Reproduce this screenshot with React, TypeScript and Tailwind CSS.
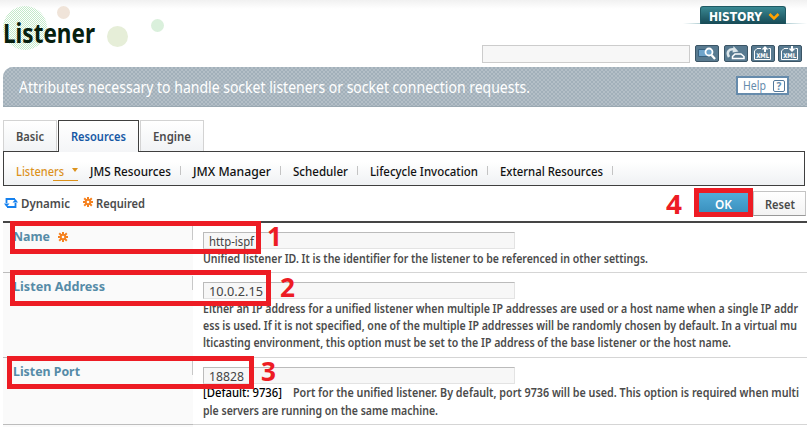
import { useLayoutEffect, useRef } from "react";
import type { ReactNode } from "react";

/* One line of text, condensed or widened to the given width. */
function Line({ text, w, className = "" }: { text: string; w: number; className?: string }) {
  const ref = useRef<HTMLSpanElement>(null);
  useLayoutEffect(() => {
    const el = ref.current;
    if (el && el.offsetWidth) {
      el.style.transform = "none";
      el.style.transform = `scaleX(${w / el.getBoundingClientRect().width})`;
    }
  }, [w, text]);
  return (
    <span className={`block shrink-0 whitespace-nowrap ${className}`} style={{ width: w }}>
      <span ref={ref} className="inline-block origin-left align-top">
        {text}
      </span>
    </span>
  );
}

function Gear({ className = "" }: { className?: string }) {
  return (
    <svg viewBox="0 0 10 10" className={`size-[10px] shrink-0 ${className}`} fill="none" stroke="#f58220">
      <path d="M5 0v3M5 7v3M0 5h3M7 5h3M1.2 1.2l2.2 2.2M6.6 6.6l2.2 2.2M8.8 1.2 6.6 3.4M3.4 6.6 1.2 8.8" strokeWidth="2" />
      <circle cx="5" cy="5" r="2.3" strokeWidth="2" />
    </svg>
  );
}

function ToolButton({ children, className = "" }: { children: ReactNode; className?: string }) {
  return (
    <button className={`h-[17px] w-6 shrink-0 rounded-[2px] border border-[#3b5566] bg-[#587a90] ${className}`}>
      <svg viewBox="0 0 22 15" className="block h-[15px] w-[22px]" fill="none" stroke="white">
        {children}
      </svg>
    </button>
  );
}

function XmlIcon({ up }: { up?: boolean }) {
  return (
    <>
      <path d="M2.5 13.500V5L5 2.500h4M16.500 2.500h2v11H2.500" strokeWidth="1" />
      <path d={up ? "M13 0 9.500 3.500H12V6h2V3.500h2.500Z" : "M13 6 9.500 2.500H12V0h2v2.500h2.500Z"} fill="white" stroke="none" />
      <text x="4.200" y="12.300" textLength="13" lengthAdjust="spacingAndGlyphs" className="font-['DejaVu_Sans',sans-serif] text-[6.500px] font-bold" fill="white" stroke="none">
        XML
      </text>
    </>
  );
}

function Row({ label, lw, required, value, vw, height, children }: {
  label: string; lw: number; required?: boolean; value: string; vw: number; height: string; children: ReactNode;
}) {
  return (
    <div className={`flex border-b border-[#d5d5d5] ${height}`}>
      <div className="-mb-px flex w-[190px] shrink-0 justify-between border-b border-[#bcbcbc] bg-[#fafafa] pl-[10px]">
        <div className="flex h-7 items-start pt-[6px] text-[12.5px] leading-4 font-bold text-[#558ba7]">
          <Line text={label} w={lw} />
          {required && <Gear className="mt-[3px] ml-[8px]" />}
        </div>
        <div className="mt-[3px] h-[14px] w-px bg-[#c8c8c8]" />
      </div>
      <div className="ml-[10px]">
        <div className="mt-[9px] flex h-[17px] w-[312px] items-start border border-[#e3e3e3] border-t-[#bbb] border-l-[#bbb] bg-[#f7f7f7] pl-[5px] text-[13px] font-normal text-[#444]">
          <Line text={value} w={vw} className="leading-4" />
        </div>
        {children}
      </div>
    </div>
  );
}

const navItems = [
  { text: "JMS Resources", w: 81, box: "w-[103px]" },
  { text: "JMX Manager", w: 78, box: "w-[100px]" },
  { text: "Scheduler", w: 55, box: "w-[77px]" },
  { text: "Lifecycle Invocation", w: 108, box: "w-[130px]" },
  { text: "External Resources", w: 103, box: "w-[125px]" },
];

export default function App() {
  return (
    <div className="relative h-[427px] w-[807px] overflow-hidden bg-white font-['Noto_Sans','Open_Sans',sans-serif] text-[12px] text-[#4b4b4b]">
      <header className="flex h-[67px] justify-between bg-[linear-gradient(#f1f1f1_0px,#ffffff_9px)]">
        <div className="relative pt-[15px] pl-[3px]">
          <svg className="absolute top-0 left-0 h-[60px] w-[180px]">
            <defs>
              <pattern id="dots" width="2" height="2" patternUnits="userSpaceOnUse">
                <path d="M0 0h1v1H0zM1 1h1v1H1z" fill="#c3e9c9" shapeRendering="crispEdges" />
              </pattern>
            </defs>
            <circle cx="25" cy="28" r="22" fill="url(#dots)" />
            <circle cx="63.5" cy="12.5" r="6.5" fill="#f0e4d9" />
            <circle cx="117.5" cy="36.5" r="10.5" fill="#e6eed8" />
            <circle cx="157.5" cy="25.5" r="6.5" fill="#daf0dc" />
          </svg>
          <h1 className="relative text-[27px] leading-9 font-bold text-[#07200f]">
            <Line text="Listener" w={92} />
          </h1>
        </div>
        <div className="flex w-[325px] flex-col">
          <div className="flex h-6 w-full items-end justify-end bg-[linear-gradient(90deg,transparent,#8fb9c0_25px,#8fb9c0_95px,transparent)] bg-[length:124px_1px] bg-[position:right_0px_bottom_0px] bg-no-repeat pt-[6px] pr-[21px]">
            <button className="flex h-[18px] w-[86px] items-center rounded-t-[3px] border border-b-0 border-[#1f5963] bg-linear-to-b from-[#3a8993] to-[#174a55] pt-[2px] pl-[8px] font-['DejaVu_Sans',sans-serif] text-[13px] font-bold text-white">
              <Line text="HISTORY" w={53} className="leading-4" />
              <svg viewBox="0 0 12 8" className="ml-[6px] h-[8px] w-3">
                <path d="m1.5 1 4.5 4.5L10.500 1" fill="none" stroke="#ffa200" strokeWidth="2.5" />
              </svg>
            </button>
          </div>
          <div className="flex pt-[21px]">
            <div className="h-[18px] w-[208px] shrink-0 border border-[#ccc] bg-[#f7f7f7]" />
            <ToolButton className="ml-[5px]">
              <path d="M2.500 3.500h9v7h-9Z" fill="#6ea4cb" stroke="#38617f" />
              <circle cx="13" cy="6" r="3.500" fill="#6ea4cb" strokeWidth="1.8" />
              <path d="m15.500 9 3.500 4" strokeWidth="2.3" />
            </ToolButton>
            <ToolButton className="ml-[5px]">
              <path d="M4 11C1 6 4 2.500 9.500 3.500" strokeWidth="2.500" stroke="#dce6ea" />
              <path d="m8.500 0 5 5.500-6 1Z" fill="#dce6ea" stroke="none" />
              <path d="M7.500 10.500 10 8h6l3 2.500v2H7.500Z" strokeWidth="1.500" />
            </ToolButton>
            <ToolButton className="ml-[3px]"><XmlIcon up /></ToolButton>
            <ToolButton className="ml-[3px]"><XmlIcon /></ToolButton>
          </div>
        </div>
      </header>

      <section className="ml-[3px] flex h-10 items-start justify-between rounded-tl-[10px] border-b border-[#9aa8b1] bg-[#b4bfc7] bg-[repeating-conic-gradient(#a2b0ba_0_25%,#b4bfc7_0_50%)] bg-[length:4px_4px] pr-[18px] pl-[16px]">
        <Line text="Attributes necessary to handle socket listeners or socket connection requests." w={511} className="pt-[8px] text-[16px] leading-6 text-white" />
        <button className="mt-[9px] flex h-[19px] w-[53px] items-center border-2 border-[#668bac] bg-white pl-[5px] text-[12px] text-[#668bac]">
          <Line text="Help" w={23} className="leading-4" />
          <span className="ml-[7px] flex size-3 items-center justify-center rounded-[2px] border border-[#54799b] text-[10px] leading-none font-bold">?</span>
        </button>
      </section>

      <nav className="relative z-10 mt-[13px] ml-[3px] flex h-8 items-start gap-px font-semibold">
        <div className="h-[31px] w-[54px] border border-b-0 border-[#d3d3d3] bg-linear-to-b from-white to-[#f1f3f5] pt-[8px] pl-[12px] leading-4">
          <Line text="Basic" w={28} />
        </div>
        <div className="h-8 w-[81px] border border-b-0 border-[#3f3f3f] bg-linear-to-b from-white to-[#f4f5f7] pt-[8px] pl-[12px] leading-4 text-[#1658a5]">
          <Line text="Resources" w={55} />
        </div>
        <div className="h-[31px] w-[64px] border border-b-0 border-[#d3d3d3] bg-linear-to-b from-white to-[#f1f3f5] pt-[8px] pl-[12px] leading-4">
          <Line text="Engine" w={38} />
        </div>
      </nav>

      <div className="-mt-px ml-[3px] flex h-[35px] w-[802px] items-start border border-[#3f3f3f] bg-linear-to-b from-white from-30% to-[#eff1f3] pt-[12px] pl-[12px] leading-4 font-medium text-[#111]">
        <div className="flex h-[17px] w-[74px] text-[#dc921c]">
          <Line text="Listeners" w={48} />
          <div className="-ml-[11px] flex h-[17px] w-[25px] shrink-0 justify-end border-b border-[#dc921c] pt-[4px]">
            <div className="h-0 w-0 border-x-[3.5px] border-t-4 border-x-transparent border-t-[#dc921c]" />
          </div>
        </div>
        {navItems.map((n) => (
          <div key={n.text} className={`flex shrink-0 justify-between ${n.box}`}>
            <Line text={n.text} w={n.w} />
            <div className="mt-[2px] mr-[12px] h-[9px] w-px bg-[#c4c4c4]" />
          </div>
        ))}
      </div>

      <div className="flex h-[35px] items-start pl-[4px] font-semibold">
        <svg viewBox="0 0 14 12" className="mt-[11px] h-3 w-[14px] shrink-0" fill="none" stroke="#1681ee" strokeWidth="1.8">
          <path d="M2.500 6V2h8.500M11.500 6v4H3" />
          <path d="M0 6.500h5.500L2.500 10ZM8.500 5.500H14L11.500 2Z" fill="#1681ee" stroke="none" />
        </svg>
        <Line text="Dynamic" w={49} className="mt-[10px] ml-[3px] leading-4" />
        <Gear className="mt-[11px] ml-[13px]" />
        <Line text="Required" w={49} className="mt-[10px] ml-[3px] leading-4" />
        <div className="mt-[2px] ml-auto h-[29px] w-[59px] shrink-0 border-[5px] border-[#ed1c24] bg-linear-to-b from-[#52add9] to-[#3b91bf] pt-[4px] pl-[16px] text-white">
          <Line text="OK" w={17} className="leading-4" />
        </div>
        <div className="mt-[5px] mr-px h-[25px] w-[53px] shrink-0 border border-[#c4c4c4] border-b-[#999] bg-linear-to-b from-white to-[#f3f3f3] pt-[5px] pl-[11px]">
          <Line text="Reset" w={30} className="leading-4" />
        </div>
      </div>

      <main className="ml-[3px] border-t-2 border-[#454545] font-semibold">
        <Row label="Name" lw={37} required value="http-ispf" vw={45} height="h-[50px]">
          <Line text="Unified listener ID. It is the identifier for the listener to be referenced in other settings." w={445} className="mt-px leading-[17px]" />
        </Row>
        <Row label="Listen Address" lw={92} value="10.0.2.15" vw={54} height="h-[85px]">
          <Line text="Either an IP address for a unified listener when multiple IP addresses are used or a host name when a single IP addr" w={595} className="mt-px leading-[17px]" />
          <Line text="ess is used. If it is not specified, one of the multiple IP addresses will be randomly chosen by default. In a virtual mu" w={594} className="leading-[17px]" />
          <Line text="lticasting environment, this option must be set to the IP address of the base listener or the host name." w={528} className="leading-[17px]" />
        </Row>
        <Row label="Listen Port" lw={67} value="18828" vw={35} height="h-[67px]">
          <div className="flex gap-[11px] leading-[17px]">
            <Line text="[Default: 9736]" w={79} className="font-medium text-black" />
            <Line text="Port for the unified listener. By default, port 9736 will be used. This option is required when multi" w={506} />
          </div>
          <Line text="ple servers are running on the same machine." w={235} className="mt-px leading-[17px]" />
        </Row>
        <div className="h-3 w-[190px] bg-[#fafafa]" />
      </main>

      {/* Step markers over the form */}
      <div className="absolute top-[221px] left-[10px] z-20 h-[33px] w-[251px] border-[5px] border-[#ed1c24]" />
      <div className="absolute top-[270px] left-[10px] z-20 h-[36px] w-[261px] border-[5px] border-[#ed1c24]" />
      <div className="absolute top-[356px] left-[7px] z-20 h-[33px] w-[247px] border-[5px] border-[#ed1c24]" />
      <div className="absolute top-[222px] left-[267px] text-[26px] leading-7 font-bold text-[#ed1c24]"><Line text="1" w={15} /></div>
      <div className="absolute top-[273px] left-[280px] text-[26px] leading-7 font-bold text-[#ed1c24]"><Line text="2" w={15} /></div>
      <div className="absolute top-[357px] left-[261px] text-[26px] leading-7 font-bold text-[#ed1c24]"><Line text="3" w={15} /></div>
      <div className="absolute top-[190px] left-[666px] text-[26px] leading-7 font-bold text-[#ed1c24]"><Line text="4" w={16} /></div>
    </div>
  );
}
